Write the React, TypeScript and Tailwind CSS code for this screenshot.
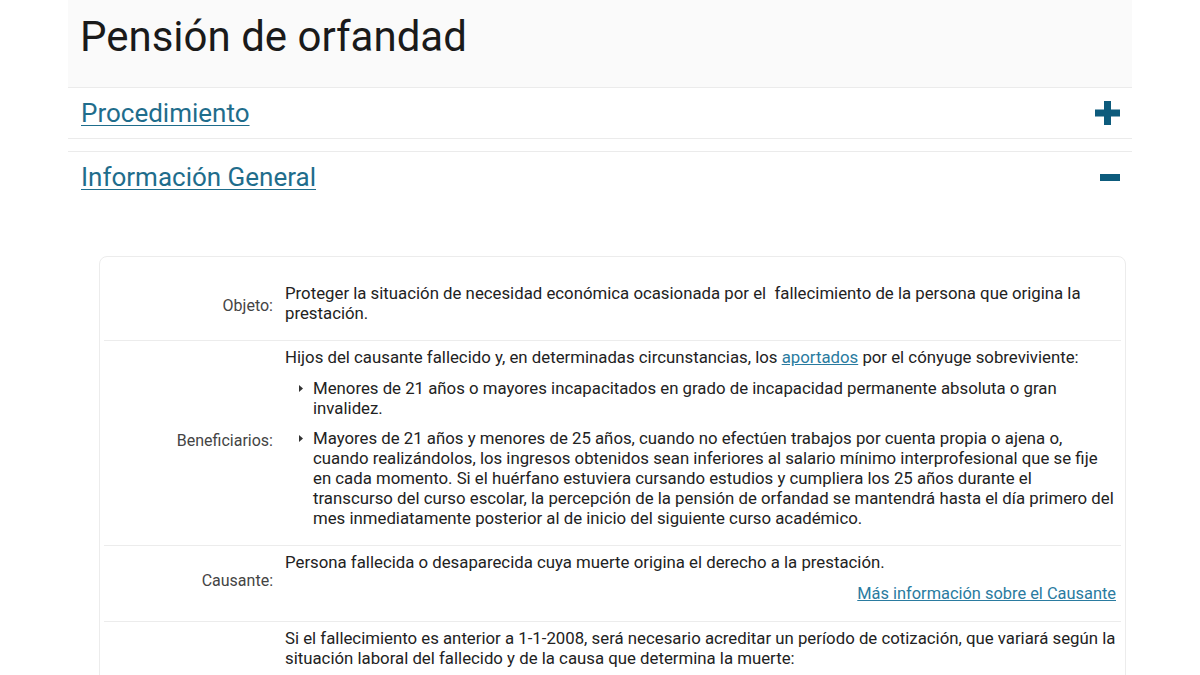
import React from "react";

const font = { fontFamily: "Roboto, 'Noto Sans', sans-serif" };

function PlusIcon() {
    return (
        <svg width="25" height="24" viewBox="0 0 25 24" className="text-[#0d5b7c]">
            <rect x="9" y="0" width="7" height="24" fill="currentColor" />
            <rect x="0" y="8.5" width="25" height="7" fill="currentColor" />
        </svg>
    );
}

function MinusIcon() {
    return (
        <svg width="20" height="7" viewBox="0 0 20 7" className="text-[#0d5b7c]">
            <rect x="0" y="0" width="20" height="7" fill="currentColor" />
        </svg>
    );
}

function Marker() {
    return (
        <span className="flex h-5 w-[14px] shrink-0 items-center">
            <svg width="4" height="7" viewBox="0 0 4 7">
                <path d="M0 0 L4 3.5 L0 7 Z" fill="#333" />
            </svg>
        </span>
    );
}

interface RowProps {
    label: string;
    children: React.ReactNode;
    last?: boolean;
}

function Row({ label, children, last }: RowProps) {
    return (
        <div className={"flex " + (last ? "" : "border-b border-[#ececec]")}>
            <div className="flex w-[169px] shrink-0 items-center justify-end pt-[12px] pb-[17px] text-right text-[16px] leading-5 text-[#444]">
                {label}
            </div>
            <div className="flex-1 pt-[6px] pr-[5px] pb-[17px] pl-[12px] text-[16.8px] leading-5 text-[#222]">
                {children}
            </div>
        </div>
    );
}

function Bullets({ items }: { items: string[] }) {
    return (
        <ul className="mt-[11px] ml-[14px] flex flex-col gap-[10px]">
            {items.map((item, i) => (
                <li key={i} className="flex">
                    <Marker />
                    <span>{item}</span>
                </li>
            ))}
        </ul>
    );
}

export default function App() {
    return (
        <div className="min-h-screen w-full bg-white" style={font}>
            <div className="mx-auto w-[1064px]">
                <div className="h-[87px] bg-[#fafafa] pt-[12px] pl-[12px]">
                    <h1 className="text-[42px] leading-[49px] font-normal text-[#1a1a1a]">Pensión de orfandad</h1>
                </div>

                <div className="border-y border-[#ebebeb]">
                    <div className="flex h-[50px] items-center justify-between pr-[12px] pl-[13px]">
                        <a href="#" className="text-[26px] text-[#1f6d8c] underline decoration-1 underline-offset-[3px]">
                            Procedimiento
                        </a>
                        <PlusIcon />
                    </div>
                </div>

                <div className="mt-[12px] border-t border-[#ebebeb]">
                    <div className="flex h-[50px] items-center justify-between pr-[12px] pl-[13px]">
                        <a href="#" className="text-[26px] text-[#1f6d8c] underline decoration-1 underline-offset-[3px]">
                            Información General
                        </a>
                        <MinusIcon />
                    </div>

                    <div className="mt-[54px] mr-[6px] ml-[31px] rounded-[8px] border border-[#ececec] px-[4px] pt-[20px]">
                        <Row label="Objeto:">
                            <p>
                                Proteger la situación de necesidad económica ocasionada por el{"\u00a0"} fallecimiento de la persona que origina la prestación.
                            </p>
                        </Row>

                        <Row label="Beneficiarios:">
                            <p>
                                Hijos del causante fallecido y, en determinadas circunstancias, los{" "}
                                <a href="#" className="text-[#2a7ba0] underline">aportados</a> por el cónyuge sobreviviente:
                            </p>
                            <Bullets
                                items={[
                                    "Menores de 21 años o mayores incapacitados en grado de incapacidad permanente absoluta o gran invalidez.",
                                    "Mayores de 21 años y menores de 25 años, cuando no efectúen trabajos por cuenta propia o ajena o, cuando realizándolos, los ingresos obtenidos sean inferiores al salario mínimo interprofesional que se fije en cada momento. Si el huérfano estuviera cursando estudios y cumpliera los 25 años durante el transcurso\u00a0del curso escolar, la percepción de la pensión de orfandad se mantendrá hasta el día primero del mes inmediatamente posterior al de inicio del siguiente curso académico.",
                                ]}
                            />
                        </Row>

                        <Row label="Causante:">
                            <p>Persona fallecida o desaparecida cuya muerte origina el derecho a la prestación.</p>
                            <p className="mt-[11px] text-right">
                                <a href="#" className="text-[16.4px] text-[#2a7ba0] underline">Más información sobre el Causante</a>
                            </p>
                        </Row>

                        <Row label="Requisitos:" last>
                            <p>
                                Si el fallecimiento es anterior a 1-1-2008, será necesario acreditar un período de cotización, que variará según la situación laboral del fallecido y de la causa que determina la muerte:
                            </p>
                            <Bullets
                                items={[
                                    "Si el causante se encontrase en alta o situación asimilada: si la muerte es debida a enfermedad común, 500 días dentro de un período ininterrumpido de 5 años inmediatamente anteriores a la fecha del fallecimiento.",
                                    "Si la muerte es debida a accidente, sea o no de trabajo, o a enfermedad profesional, no se exige período previo de cotización.",
                                    "Si el causante no se encontrase en alta o situación asimilada: 15 años cotizados a lo largo de su vida laboral.",
                                ]}
                            />
                        </Row>
                    </div>
                </div>
            </div>
        </div>
    );
}
